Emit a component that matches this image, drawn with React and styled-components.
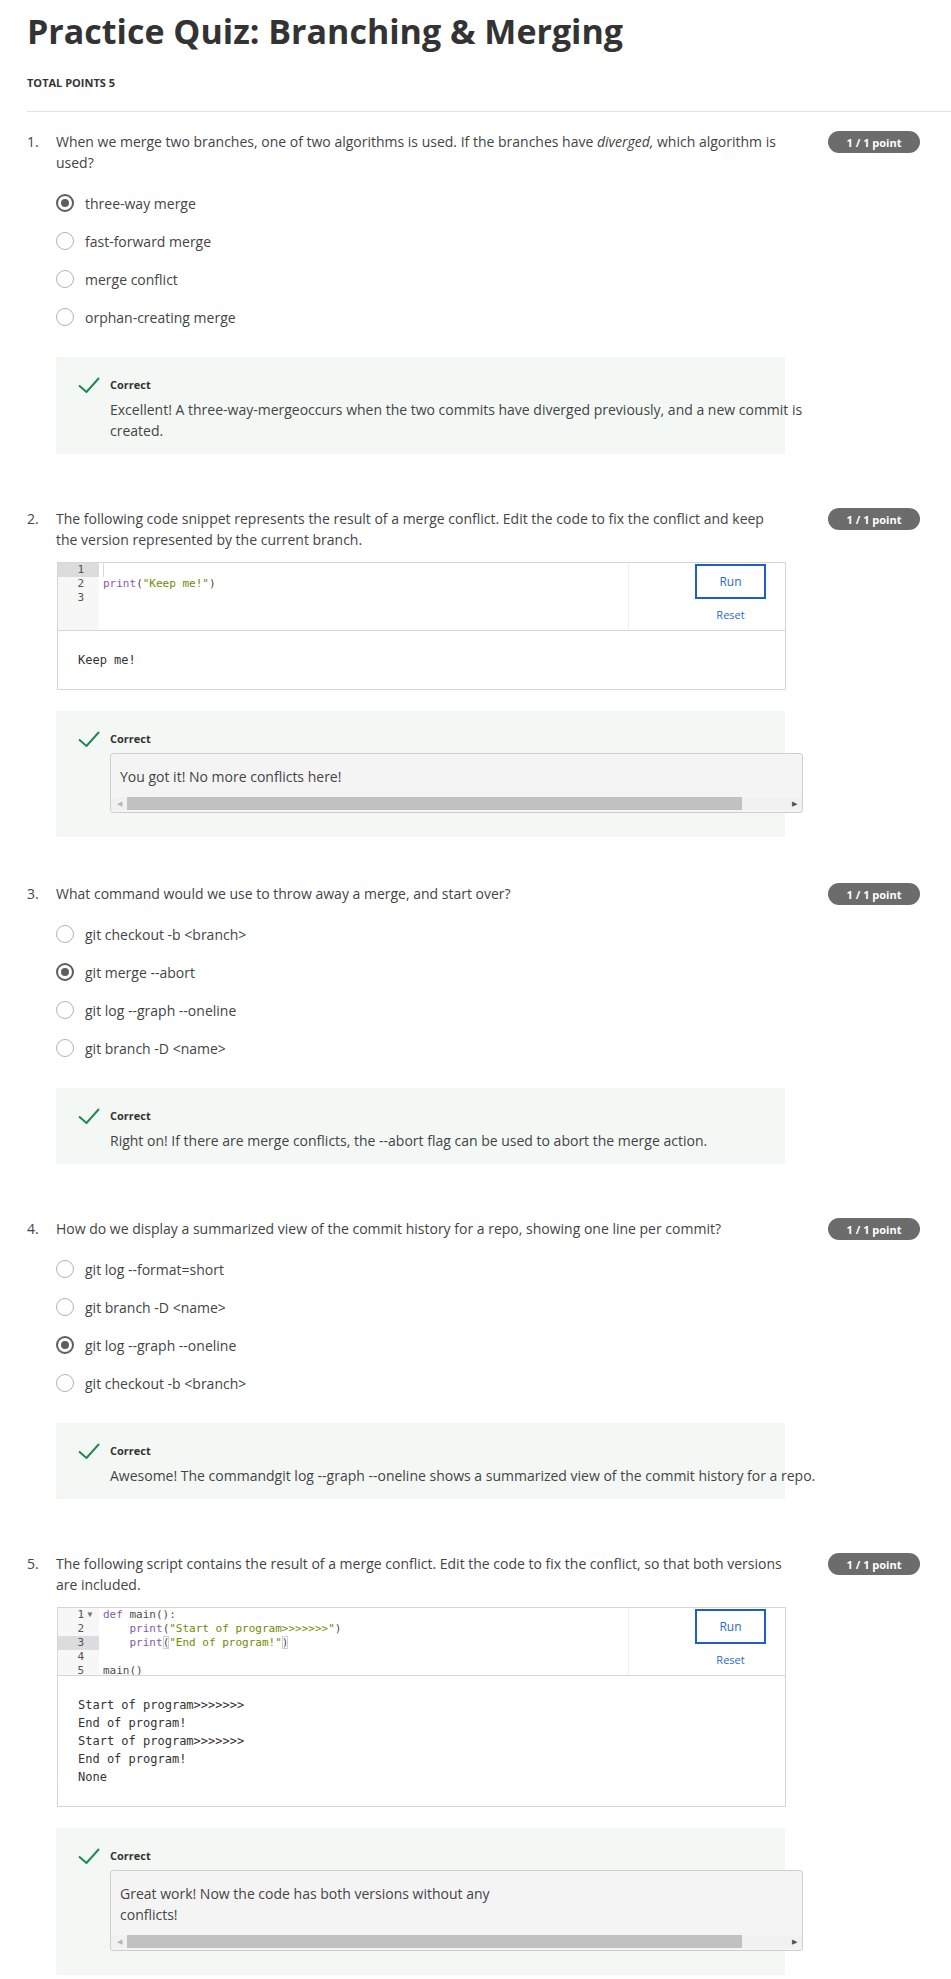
import React from 'react';
import styled, { createGlobalStyle } from 'styled-components';

const GlobalStyle = createGlobalStyle`
  body {
    margin: 0;
    background: #fff;
    font-family: "Open Sans", "Liberation Sans", sans-serif;
    color: #444;
  }
`;

const Page = styled.div`
  padding: 11px 0 2px 27px;
`;

const Title = styled.h1`
  margin: 0;
  font-size: 34px;
  line-height: 41px;
  font-weight: 700;
  color: #333;
`;

const TotalPoints = styled.div`
  margin-top: 23px;
  font-size: 11px;
  line-height: 16px;
  font-weight: 700;
  color: #333;
  text-transform: uppercase;
`;

const Divider = styled.hr`
  margin: 20px 0 0;
  border: 0;
  border-top: 1px solid #e1e1e1;
`;

const QuestionList = styled.div`
  padding-top: 19px;
`;

const Question = styled.section`
  display: flex;
  align-items: flex-start;
  margin-bottom: ${p => (p.$tight ? '46px' : '54px')};
  &:last-child { margin-bottom: 0; }
`;

const Number = styled.div`
  width: 29px;
  flex: 0 0 29px;
  font-size: 14px;
  line-height: 21px;
`;

const Body = styled.div`
  flex: 0 0 730px;
`;

const Prompt = styled.p`
  margin: 0;
  font-size: 14px;
  line-height: 21px;
  color: #444;
`;

const Badge = styled.div`
  margin-left: auto;
  margin-right: 31px;
  width: 92px;
  height: 22px;
  border-radius: 11px;
  background: #6c6c6c;
  color: #fff;
  font-size: 11px;
  font-weight: 700;
  display: flex;
  align-items: center;
  justify-content: center;
`;

const Options = styled.div`
  margin-top: 20px;
  display: flex;
  flex-direction: column;
  gap: 18px;
`;

const Option = styled.label`
  display: flex;
  align-items: center;
  gap: 11px;
  height: 20px;
  font-size: 14px;
  color: #444;
`;

const Radio = styled.span`
  box-sizing: border-box;
  width: 18px;
  height: 18px;
  border-radius: 50%;
  border: ${p => (p.$checked ? '2px solid #5e5e5e' : '1.5px solid #b3b3b3')};
  background: #fff;
  display: flex;
  align-items: center;
  justify-content: center;
  &::after {
    content: '';
    display: ${p => (p.$checked ? 'block' : 'none')};
    width: 8px;
    height: 8px;
    border-radius: 50%;
    background: #5e5e5e;
  }
`;

const Feedback = styled.div`
  margin-top: ${p => (p.$afterEditor ? '21px' : '30px')};
  width: 729px;
  box-sizing: border-box;
  background: #f3f8f5;
  padding: 20px 0 ${p => (p.$code ? '24px' : '13px')} 22px;
  display: flex;
  align-items: flex-start;
`;

const CheckCol = styled.div`
  flex: 0 0 32px;
  height: 16px;
  display: flex;
  align-items: center;
`;

const FeedbackContent = styled.div`
  flex: 0 0 720px;
`;

const CorrectLabel = styled.div`
  font-size: 11px;
  line-height: 16px;
  font-weight: 700;
  color: #333;
`;

const FeedbackText = styled.div`
  margin-top: 6px;
  font-size: 14px;
  line-height: 21px;
  color: #444;
`;

const NoteBox = styled.div`
  margin-top: 6px;
  width: 693px;
  box-sizing: border-box;
  background: #f4f4f4;
  border: 1px solid #cfcfcf;
  border-radius: 3px;
  padding-top: 12px;
  padding-bottom: 2px;
`;

const NoteText = styled.div`
  padding-left: 9px;
  font-size: 14px;
  line-height: 21px;
  color: #444;
`;

const ScrollTrack = styled.div`
  margin-top: 10px;
  height: 13px;
  background: #f1f1f1;
  display: flex;
  align-items: stretch;
`;

const ScrollArrow = styled.div`
  flex: 0 0 16px;
  display: flex;
  align-items: center;
  justify-content: center;
  font-size: 7px;
  color: ${p => (p.$dim ? '#b5b5b5' : '#505050')};
`;

const ScrollThumb = styled.div`
  flex: 0 0 615px;
  background: #c1c1c1;
`;

const ScrollRest = styled.div`
  flex: 1;
`;

const Editor = styled.div`
  margin-top: 12px;
  width: 729px;
  box-sizing: border-box;
  border: 1px solid #d6d6d6;
  margin-left: 1px;
`;

const CodeRow = styled.div`
  display: flex;
  height: 67px;
  overflow: hidden;
  border-bottom: 1px solid #d6d6d6;
`;

const Gutter = styled.div`
  flex: 0 0 41px;
  background: #f7f7f7;
`;

const GutterCell = styled.div`
  height: 14px;
  display: flex;
  justify-content: flex-end;
  padding-right: 3px;
  background: ${p => (p.$active ? '#dcdcdc' : 'transparent')};
  font-family: "DejaVu Sans Mono", "Liberation Mono", monospace;
  font-size: 11px;
  line-height: 14px;
  color: #555;
`;

const Fold = styled.span`
  width: 12px;
  text-align: center;
  font-size: 8px;
  color: #777;
`;

const CodeArea = styled.div`
  flex: 1;
  padding-left: 4px;
  background: #fff;
`;

const CodeLine = styled.div`
  height: 14px;
  white-space: pre;
  font-family: "DejaVu Sans Mono", "Liberation Mono", monospace;
  font-size: 11px;
  line-height: 14px;
  color: #4d4d4d;
`;

const Kw = styled.span`
  color: #8959a8;
`;

const Str = styled.span`
  color: #718c00;
`;

const Match = styled.span`
  outline: 1px solid #d0d0d0;
  outline-offset: -1px;
`;

const Cursor = styled.span`
  display: inline-block;
  width: 0;
  height: 14px;
  border-left: 1px solid #d8d8d8;
  vertical-align: top;
`;

const RunPanel = styled.div`
  flex: 0 0 157px;
  box-sizing: border-box;
  border-left: 1px solid #efefef;
  padding: 1px 19px 0 0;
  display: flex;
  justify-content: flex-end;
`;

const RunInner = styled.div`
  width: 71px;
  display: flex;
  flex-direction: column;
  align-items: center;
`;

const RunButton = styled.button`
  width: 71px;
  height: 35px;
  box-sizing: border-box;
  border: 2px solid #1f5fbf;
  background: #fff;
  color: #2a6bc7;
  font-family: "Open Sans", sans-serif;
  font-size: 12px;
  padding: 0;
`;

const Reset = styled.div`
  margin-top: 8px;
  font-size: 11px;
  line-height: 16px;
  color: #2a6bc7;
`;

const Output = styled.div`
  padding: 20px;
  white-space: pre;
  font-family: "DejaVu Sans Mono", "Liberation Mono", monospace;
  font-size: 12px;
  line-height: 18px;
  color: #333;
`;

function Check() {
  return (
    <svg width="22" height="16" viewBox="0 0 22 16">
      <path d="M1 8.5 L8.5 15 L21 1" fill="none" stroke="#1e8a50" strokeWidth="2" />
    </svg>
  );
}

function Correct({ children, code, afterEditor }) {
  return (
    <Feedback $code={code} $afterEditor={afterEditor}>
      <CheckCol><Check /></CheckCol>
      <FeedbackContent>
        <CorrectLabel>Correct</CorrectLabel>
        {code ? (
          <NoteBox>
            <NoteText>{children}</NoteText>
            <ScrollTrack>
              <ScrollArrow $dim>◀</ScrollArrow>
              <ScrollThumb />
              <ScrollRest />
              <ScrollArrow>▶</ScrollArrow>
            </ScrollTrack>
          </NoteBox>
        ) : (
          <FeedbackText>{children}</FeedbackText>
        )}
      </FeedbackContent>
    </Feedback>
  );
}

function Choices({ items, selected }) {
  return (
    <Options>
      {items.map(t => (
        <Option key={t}>
          <Radio $checked={t === selected} />
          {t}
        </Option>
      ))}
    </Options>
  );
}

function CodeEditor({ lines, active, fold, output }) {
  return (
    <Editor>
      <CodeRow>
        <Gutter>
          {lines.map((_, i) => (
            <GutterCell key={i} $active={i + 1 === active}>
              {i + 1}
              <Fold>{fold === i + 1 ? '▼' : ''}</Fold>
            </GutterCell>
          ))}
        </Gutter>
        <CodeArea>
          {lines.map((l, i) => (
            <CodeLine key={i}>{l}</CodeLine>
          ))}
        </CodeArea>
        <RunPanel>
          <RunInner>
            <RunButton>Run</RunButton>
            <Reset>Reset</Reset>
          </RunInner>
        </RunPanel>
      </CodeRow>
      <Output>{output}</Output>
    </Editor>
  );
}

export default function App() {
  return (
    <Page>
      <GlobalStyle />
      <Title>Practice Quiz: Branching &amp; Merging</Title>
      <TotalPoints>Total points 5</TotalPoints>
      <Divider />
      <QuestionList>
        <Question>
          <Number>1.</Number>
          <Body>
            <Prompt>
              When we merge two branches, one of two algorithms is used. If the branches have <em>diverged,</em> which algorithm is used?
            </Prompt>
            <Choices
              items={['three-way merge', 'fast-forward merge', 'merge conflict', 'orphan-creating merge']}
              selected="three-way merge"
            />
            <Correct>
              Excellent! A three-way-mergeoccurs when the two commits have diverged previously, and a new commit is created.
            </Correct>
          </Body>
          <Badge>1 / 1 point</Badge>
        </Question>

        <Question $tight>
          <Number>2.</Number>
          <Body>
            <Prompt>
              The following code snippet represents the result of a merge conflict. Edit the code to fix the conflict and keep the version represented by the current branch.
            </Prompt>
            <CodeEditor
              active={1}
              lines={[
                <Cursor />,
                <><Kw>print</Kw>(<Str>"Keep me!"</Str>)</>,
                '',
              ]}
              output="Keep me!"
            />
            <Correct code afterEditor>You got it! No more conflicts here!</Correct>
          </Body>
          <Badge>1 / 1 point</Badge>
        </Question>

        <Question>
          <Number>3.</Number>
          <Body>
            <Prompt>What command would we use to throw away a merge, and start over?</Prompt>
            <Choices
              items={['git checkout -b <branch>', 'git merge --abort', 'git log --graph --oneline', 'git branch -D <name>']}
              selected="git merge --abort"
            />
            <Correct>
              Right on! If there are merge conflicts, the --abort flag can be used to abort the merge action.
            </Correct>
          </Body>
          <Badge>1 / 1 point</Badge>
        </Question>

        <Question>
          <Number>4.</Number>
          <Body>
            <Prompt>How do we display a summarized view of the commit history for a repo, showing one line per commit?</Prompt>
            <Choices
              items={['git log --format=short', 'git branch -D <name>', 'git log --graph --oneline', 'git checkout -b <branch>']}
              selected="git log --graph --oneline"
            />
            <Correct>
              Awesome! The commandgit log --graph --oneline shows a summarized view of the commit history for a repo.
            </Correct>
          </Body>
          <Badge>1 / 1 point</Badge>
        </Question>

        <Question>
          <Number>5.</Number>
          <Body>
            <Prompt>
              The following script contains the result of a merge conflict. Edit the code to fix the conflict, so that both versions are included.
            </Prompt>
            <CodeEditor
              active={3}
              fold={1}
              lines={[
                <><Kw>def</Kw> main():</>,
                <>{'    '}<Kw>print</Kw>(<Str>"Start of program&gt;&gt;&gt;&gt;&gt;&gt;&gt;"</Str>)</>,
                <>{'    '}<Kw>print</Kw><Match>(</Match><Str>"End of program!"</Str><Match>)</Match></>,
                '',
                'main()',
              ]}
              output={'Start of program>>>>>>>\nEnd of program!\nStart of program>>>>>>>\nEnd of program!\nNone'}
            />
            <Correct code afterEditor>
              Great work! Now the code has both versions without any<br />conflicts!
            </Correct>
          </Body>
          <Badge>1 / 1 point</Badge>
        </Question>
      </QuestionList>
    </Page>
  );
}
